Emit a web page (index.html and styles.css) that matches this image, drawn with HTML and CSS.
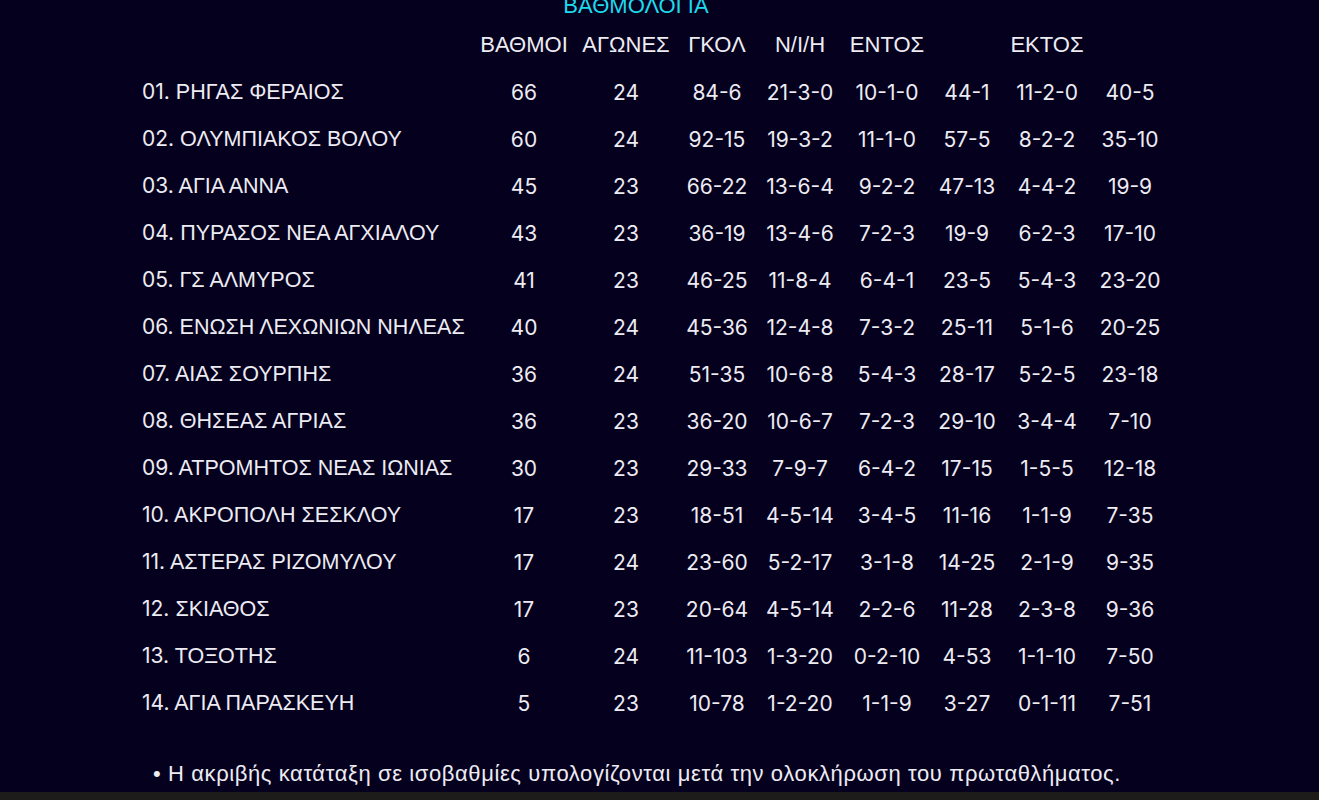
FILE: index.html
```html
<!DOCTYPE html>
<html lang="el">
<head>
<meta charset="utf-8">
<title>ΒΑΘΜΟΛΟΓΙΑ</title>
<link rel="stylesheet" href="styles.css">
</head>
<body>
<main class="page">
  <h1 class="title">ΒΑΘΜΟΛΟΓΙΑ</h1>
  <table class="standings">
    <colgroup>
      <col class="c-name"><col class="c-pts"><col class="c-gp"><col class="c-gl"><col class="c-wdl"><col class="c-home"><col class="c-homeg"><col class="c-away"><col class="c-awayg">
    </colgroup>
    <thead>
      <tr><th></th><th>ΒΑΘΜΟΙ</th><th>ΑΓΩΝΕΣ</th><th>ΓΚΟΛ</th><th>Ν/Ι/Η</th><th>ΕΝΤΟΣ</th><th></th><th>ΕΚΤΟΣ</th><th></th></tr>
    </thead>
    <tbody>
      <tr><td class="team"><span class="n">01.</span> ΡΗΓΑΣ ΦΕΡΑΙΟΣ</td><td>66</td><td>24</td><td>84-6</td><td>21-3-0</td><td>10-1-0</td><td>44-1</td><td>11-2-0</td><td>40-5</td></tr>
      <tr><td class="team"><span class="n">02.</span> ΟΛΥΜΠΙΑΚΟΣ ΒΟΛΟΥ</td><td>60</td><td>24</td><td>92-15</td><td>19-3-2</td><td>11-1-0</td><td>57-5</td><td>8-2-2</td><td>35-10</td></tr>
      <tr><td class="team"><span class="n">03.</span> ΑΓΙΑ ΑΝΝΑ</td><td>45</td><td>23</td><td>66-22</td><td>13-6-4</td><td>9-2-2</td><td>47-13</td><td>4-4-2</td><td>19-9</td></tr>
      <tr><td class="team"><span class="n">04.</span> ΠΥΡΑΣΟΣ ΝΕΑ ΑΓΧΙΑΛΟΥ</td><td>43</td><td>23</td><td>36-19</td><td>13-4-6</td><td>7-2-3</td><td>19-9</td><td>6-2-3</td><td>17-10</td></tr>
      <tr><td class="team"><span class="n">05.</span> ΓΣ ΑΛΜΥΡΟΣ</td><td>41</td><td>23</td><td>46-25</td><td>11-8-4</td><td>6-4-1</td><td>23-5</td><td>5-4-3</td><td>23-20</td></tr>
      <tr><td class="team"><span class="n">06.</span> ΕΝΩΣΗ ΛΕΧΩΝΙΩΝ ΝΗΛΕΑΣ</td><td>40</td><td>24</td><td>45-36</td><td>12-4-8</td><td>7-3-2</td><td>25-11</td><td>5-1-6</td><td>20-25</td></tr>
      <tr><td class="team"><span class="n">07.</span> ΑΙΑΣ ΣΟΥΡΠΗΣ</td><td>36</td><td>24</td><td>51-35</td><td>10-6-8</td><td>5-4-3</td><td>28-17</td><td>5-2-5</td><td>23-18</td></tr>
      <tr><td class="team"><span class="n">08.</span> ΘΗΣΕΑΣ ΑΓΡΙΑΣ</td><td>36</td><td>23</td><td>36-20</td><td>10-6-7</td><td>7-2-3</td><td>29-10</td><td>3-4-4</td><td>7-10</td></tr>
      <tr><td class="team"><span class="n">09.</span> ΑΤΡΟΜΗΤΟΣ ΝΕΑΣ ΙΩΝΙΑΣ</td><td>30</td><td>23</td><td>29-33</td><td>7-9-7</td><td>6-4-2</td><td>17-15</td><td>1-5-5</td><td>12-18</td></tr>
      <tr><td class="team"><span class="n">10.</span> ΑΚΡΟΠΟΛΗ ΣΕΣΚΛΟΥ</td><td>17</td><td>23</td><td>18-51</td><td>4-5-14</td><td>3-4-5</td><td>11-16</td><td>1-1-9</td><td>7-35</td></tr>
      <tr><td class="team"><span class="n">11.</span> ΑΣΤΕΡΑΣ ΡΙΖΟΜΥΛΟΥ</td><td>17</td><td>24</td><td>23-60</td><td>5-2-17</td><td>3-1-8</td><td>14-25</td><td>2-1-9</td><td>9-35</td></tr>
      <tr><td class="team"><span class="n">12.</span> ΣΚΙΑΘΟΣ</td><td>17</td><td>23</td><td>20-64</td><td>4-5-14</td><td>2-2-6</td><td>11-28</td><td>2-3-8</td><td>9-36</td></tr>
      <tr><td class="team"><span class="n">13.</span> ΤΟΞΟΤΗΣ</td><td>6</td><td>24</td><td>11-103</td><td>1-3-20</td><td>0-2-10</td><td>4-53</td><td>1-1-10</td><td>7-50</td></tr>
      <tr><td class="team"><span class="n">14.</span> ΑΓΙΑ ΠΑΡΑΣΚΕΥΗ</td><td>5</td><td>23</td><td>10-78</td><td>1-2-20</td><td>1-1-9</td><td>3-27</td><td>0-1-11</td><td>7-51</td></tr>
    </tbody>
  </table>
  <p class="note">• Η ακριβής κατάταξη σε ισοβαθμίες υπολογίζονται μετά την ολοκλήρωση του πρωταθλήματος.</p>
</main>
<div class="bottom-bar"></div>
</body>
</html>
```
FILE: styles.css
```css
html, body {
  margin: 0;
  padding: 0;
}
body {
  background: #06001f;
  color: #ececf2;
  font-family: "Liberation Sans", Arial, sans-serif;
  height: 800px;
  overflow: hidden;
  display: flex;
  flex-direction: column;
}
.page {
  flex: 1;
  overflow: hidden;
}
.title {
  margin: -5px 0 0 0;
  padding-right: 47px;
  height: 26.5px;
  line-height: 22px;
  font-size: 22px;
  font-weight: normal;
  color: #1cdcec;
  text-align: center;
}
.standings {
  margin-left: 134px;
  border-collapse: collapse;
  table-layout: fixed;
  width: 1035px;
}
.c-name { width: 339px; }
.c-pts { width: 102px; }
.c-gp { width: 102px; }
.c-gl { width: 80px; }
.c-wdl { width: 86px; }
.c-home { width: 88px; }
.c-homeg { width: 72px; }
.c-away { width: 88px; }
.c-awayg { width: 78px; }
.standings th,
.standings td {
  height: 47px;
  padding: 0;
  text-align: center;
  font-size: 22px;
  font-weight: normal;
  white-space: nowrap;
}
.standings td {
  font-family: "Inter", sans-serif;
  font-size: 21px;
}
.standings td.team {
  text-align: left;
  padding-left: 8px;
  font-family: "Liberation Sans", Arial, sans-serif;
  font-size: 21.5px;
}
.team .n {
  font-family: "Inter", sans-serif;
  font-size: 21px;
}
.note {
  margin: 34px 0 0 153px;
  font-size: 22px;
  letter-spacing: 0.6px;
  line-height: 26px;
  color: #ececf2;
}
.bottom-bar {
  height: 8px;
  background: #1e1c1a;
  flex: none;
}
```
